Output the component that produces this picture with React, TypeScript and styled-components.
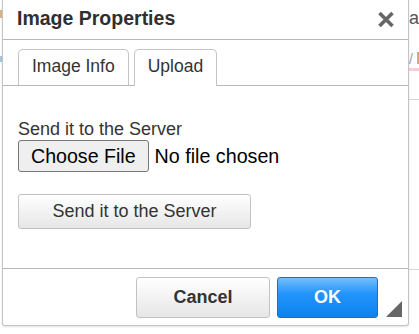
import React from "react";
import styled, { createGlobalStyle } from "styled-components";

const Global = createGlobalStyle`
  html, body { margin: 0; padding: 0; background: #ffffff; }
  body { font-family: "Liberation Sans", Arial, sans-serif; color: #333; }
  * { box-sizing: border-box; }
`;

const Page = styled.div`
  display: flex;
  width: 419px;
  height: 334px;
  overflow: hidden;
  background: #fff;
`;

const LeftStrip = styled.div`
  width: 2px;
  display: flex;
  flex-direction: column;
  padding-top: 10px;
  gap: 38px;
`;

const Mark = styled.div<{ $c: string; $h: number }>`
  width: 2px;
  height: ${(p) => p.$h}px;
  background: ${(p) => p.$c};
`;

const Dialog = styled.div`
  position: relative;
  width: 407px;
  height: 326px;
  display: flex;
  flex-direction: column;
  background: #fff;
  border: 1px solid #c4c4c4;
  border-top: none;
  border-radius: 0 0 3px 3px;
  box-shadow: 0 1px 2px rgba(0, 0, 0, 0.12);
`;

const TitleBar = styled.div`
  display: flex;
  align-items: center;
  justify-content: space-between;
  padding: 7px 13px 10px 14px;
  height: 40px;
  border-bottom: 1px solid #b8b8b8;
`;

const Title = styled.div`
  font-size: 19.5px;
  line-height: 22px;
  font-weight: bold;
  color: #2f2f2f;
`;

const Close = styled.button`
  width: 18px;
  height: 17px;
  padding: 0;
  margin-top: 3px;
  border: none;
  background: none;
  display: flex;
  cursor: pointer;
`;

const TabRow = styled.div`
  display: flex;
  gap: 5px;
  padding: 9px 15px 0;
`;

const Tab = styled.div<{ $active?: boolean }>`
  padding: 6px 13px 9px;
  font-size: 17.5px;
  line-height: 20px;
  color: #333;
  background: #fff;
  border: 1px solid #c4c4c4;
  border-bottom: none;
  border-radius: 5px 5px 0 0;
  margin-bottom: ${(p) => (p.$active ? "-1px" : "0")};
  padding-bottom: ${(p) => (p.$active ? "10px" : "9px")};
  position: relative;
  z-index: ${(p) => (p.$active ? 1 : 0)};
`;

const Panel = styled.div`
  flex: 1;
  border-top: 1px solid #b8b8b8;
  padding: 33px 15px 0;
  display: flex;
  flex-direction: column;
  align-items: flex-start;
`;

const Label = styled.div`
  font-size: 18px;
  line-height: 20px;
  color: #333;
`;

const FileRow = styled.div`
  display: flex;
  align-items: center;
  gap: 6px;
  margin-top: 1px;
`;

const FileButton = styled.button`
  height: 32px;
  padding: 0 12px;
  font-family: "Liberation Sans", Arial, sans-serif;
  font-size: 19.6px;
  color: #000;
  background: #efefef;
  border: 1px solid #767676;
  border-radius: 3px;
`;

const FileName = styled.span`
  font-size: 19.7px;
  color: #000;
`;

const SendButton = styled.button`
  margin-top: 22px;
  width: 233px;
  height: 35px;
  font-family: "Liberation Sans", Arial, sans-serif;
  font-size: 18px;
  color: #333;
  background: linear-gradient(#ffffff, #e6e6e6);
  border: 1px solid #c2c2c2;
  border-radius: 3px;
`;

const Footer = styled.div`
  height: 57px;
  border-top: 1px solid #b8b8b8;
  display: flex;
  justify-content: flex-end;
  gap: 7px;
  padding: 8px 30px 0 0;
`;

const FooterButton = styled.button<{ $primary?: boolean }>`
  width: ${(p) => (p.$primary ? "101px" : "134px")};
  height: 41px;
  font-family: "Liberation Sans", Arial, sans-serif;
  font-size: 18px;
  font-weight: bold;
  border-radius: 3px;
  color: ${(p) => (p.$primary ? "#fff" : "#333")};
  border: 1px solid ${(p) => (p.$primary ? "#0d74cf" : "#c2c2c2")};
  background: ${(p) =>
    p.$primary
      ? "linear-gradient(#73bfff 0%, #2394fa 40%, #0a83ee 100%)"
      : "linear-gradient(#ffffff, #e6e6e6)"};
`;

const Grip = styled.svg`
  position: absolute;
  right: 6px;
  bottom: 8px;
`;

const RightStrip = styled.div`
  flex: 1;
  overflow: hidden;
  display: flex;
  flex-direction: column;
  padding-top: 6px;
`;

const BgText = styled.div`
  font-size: 18px;
  line-height: 24px;
  color: #555;
  white-space: nowrap;
  margin-left: 0px;
`;

const BgV = styled.div`
  display: flex;
  justify-content: space-between;
  margin-top: 22px;
  height: 14px;
  font-size: 14px;
  line-height: 14px;
  color: #8aa0c0;
`;

const BgOrange = styled.div`
  width: 2px;
  height: 12px;
  background: #d6a77a;
`;

const BgPink = styled.div`
  height: 3px;
  margin-top: 2px;
  background: #f6cdd6;
`;

const BgLine = styled.div<{ $mt: number }>`
  height: 1px;
  margin-top: ${(p) => p.$mt}px;
  background: #d6d6d6;
`;

export default function App() {
  return (
    <>
      <Global />
      <Page>
        <LeftStrip>
          <Mark $c="#d8b58a" $h={8} />
          <Mark $c="#a9c6e0" $h={6} />
        </LeftStrip>
        <Dialog>
          <TitleBar>
            <Title>Image Properties</Title>
            <Close aria-label="Close">
              <svg width="18" height="17" viewBox="0 0 18 17">
                <path
                  d="M2.5 2 L15.5 15 M15.5 2 L2.5 15"
                  stroke="#666"
                  strokeWidth="3.6"
                  strokeLinecap="butt"
                />
              </svg>
            </Close>
          </TitleBar>
          <TabRow>
            <Tab>Image Info</Tab>
            <Tab $active>Upload</Tab>
          </TabRow>
          <Panel>
            <Label>Send it to the Server</Label>
            <FileRow>
              <FileButton>Choose File</FileButton>
              <FileName>No file chosen</FileName>
            </FileRow>
            <SendButton>Send it to the Server</SendButton>
          </Panel>
          <Footer>
            <FooterButton>Cancel</FooterButton>
            <FooterButton $primary>OK</FooterButton>
          </Footer>
          <Grip width="16" height="16" viewBox="0 0 16 16">
            <polygon points="16,0 16,16 0,16" fill="#666" />
          </Grip>
        </Dialog>
        <RightStrip>
          <BgText>ar</BgText>
          <BgV>
            <span>/</span>
            <BgOrange />
          </BgV>
          <BgPink />
          <BgLine $mt={28} />
          <BgLine $mt={169} />
        </RightStrip>
      </Page>
    </>
  );
}
